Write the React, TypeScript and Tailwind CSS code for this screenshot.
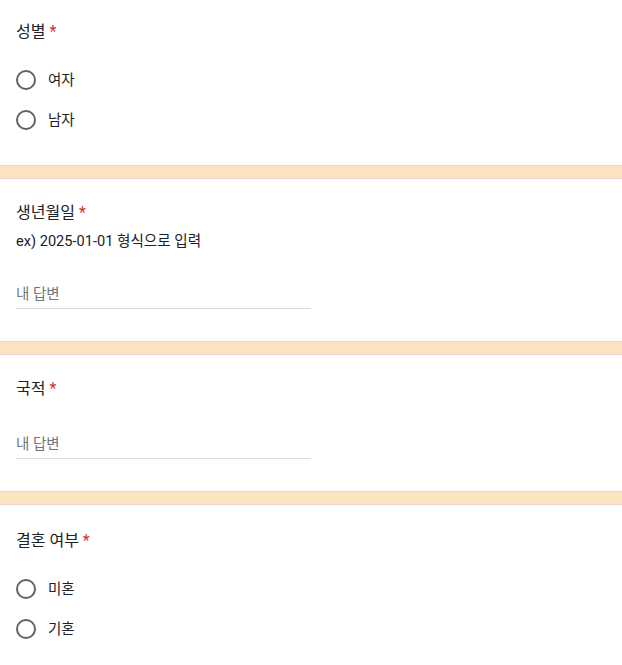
import React from "react";

const FONT = "font-['Roboto','Noto_Sans_CJK_KR',sans-serif]";

function Required() {
  return <span className="ml-1 text-[#d93025]">*</span>;
}

function Title({ children }: { children: React.ReactNode }) {
  return (
    <div className="text-[16px] leading-6 text-[#202124]">
      {children}
      <Required />
    </div>
  );
}

function Radio({ label }: { label: string }) {
  return (
    <label className="flex h-10 items-center">
      <span className="h-5 w-5 rounded-full border-2 border-[#5f6368]" />
      <span className="ml-3 pt-0.5 text-[14.5px] text-[#202124]">{label}</span>
    </label>
  );
}

function TextAnswer() {
  return (
    <div className="flex h-8 w-[295px] items-center border-b border-[#dadce0] pt-1 text-[14.5px] text-[#70757a]">
      내 답변
    </div>
  );
}

function Band() {
  return <div className="h-[14px] border-y border-[#e8d6cc] bg-[#fde4c0]" />;
}

export default function App() {
  return (
    <div className={`${FONT} w-[622px] bg-white`}>
      {/* 성별 */}
      <section className="px-4 pt-5 pb-[25px]">
        <Title>성별</Title>
        <div className="mt-4">
          <Radio label="여자" />
          <Radio label="남자" />
        </div>
      </section>
      <Band />

      {/* 생년월일 */}
      <section className="px-4 pt-[22px] pb-8">
        <Title>생년월일</Title>
        <div className="mt-1 text-[14.6px] leading-6 text-[#202124]">ex) 2025-01-01 형식으로 입력</div>
        <div className="mt-6">
          <TextAnswer />
        </div>
      </section>
      <Band />

      {/* 국적 */}
      <section className="px-4 pt-[22px] pb-8">
        <Title>국적</Title>
        <div className="mt-[26px]">
          <TextAnswer />
        </div>
      </section>
      <Band />

      {/* 결혼 여부 */}
      <section className="px-4 pt-6 pb-6">
        <Title>결혼 여부</Title>
        <div className="mt-4">
          <Radio label="미혼" />
          <Radio label="기혼" />
        </div>
      </section>
    </div>
  );
}
